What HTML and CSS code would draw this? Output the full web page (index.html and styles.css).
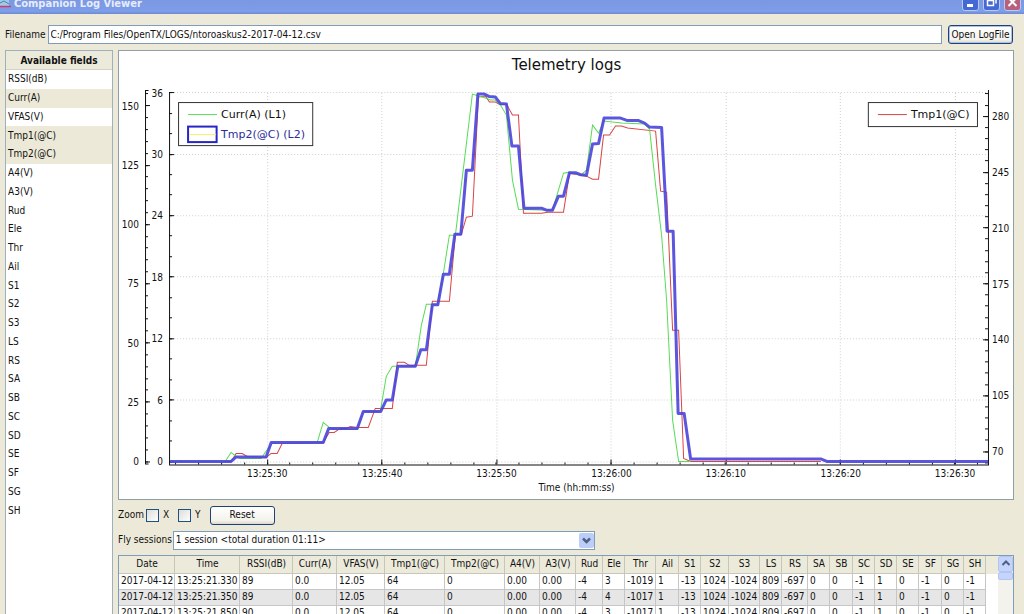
FILE: index.html
```html
<!DOCTYPE html>
<html lang="en">
<head>
<meta charset="utf-8">
<title>Companion Log Viewer</title>
<link rel="stylesheet" href="styles.css">
</head>
<body>
<div class="window">
  <header class="titlebar">
    <svg class="app-icon" width="12" height="12" viewBox="0 0 12 12" aria-hidden="true">
      <path d="M0 0h9v8H0z" fill="#a9c4ee"/><path d="M0 4l4-2 5 3" fill="none" stroke="#2c9a8a"/><path d="M0 7.500h11" stroke="#c84068" stroke-width="1.5"/>
    </svg>
    <h1 class="title">Companion Log Viewer</h1>
    <button class="win-btn" aria-label="Minimize"><svg width="15" height="16" viewBox="0 0 15 16"><path d="M4 11.500h6" stroke="#fff" stroke-width="3"/></svg></button>
    <button class="win-btn" aria-label="Restore"><svg width="15" height="16" viewBox="0 0 15 16"><path d="M3.500 6.500h6v5h-6zM3 6.500h7M6 3.500h6v6" fill="none" stroke="#fff" stroke-width="1.500"/></svg></button>
    <button class="win-btn close" aria-label="Close"><svg width="15" height="16" viewBox="0 0 15 16"><path d="M3.500 4l8 8M11.500 4l-8 8" stroke="#fff" stroke-width="2"/></svg></button>
  </header>

  <form class="file-row">
    <label for="filename">Filename</label>
    <input id="filename" class="field" type="text" value="C:/Program Files/OpenTX/LOGS/ntoroaskus2-2017-04-12.csv">
    <button class="btn btn-default" type="button">Open LogFile</button>
  </form>

  <div class="body">
    <aside class="fields">
      <h2 class="fields-head">Available fields</h2>
      <ul class="fields-list">
        <li>RSSI(dB)</li><li class="selected">Curr(A)</li><li>VFAS(V)</li><li class="selected">Tmp1(@C)</li><li class="selected">Tmp2(@C)</li><li>A4(V)</li><li>A3(V)</li><li>Rud</li><li>Ele</li><li>Thr</li><li>Ail</li><li>S1</li><li>S2</li><li>S3</li><li>LS</li><li>RS</li><li>SA</li><li>SB</li><li>SC</li><li>SD</li><li>SE</li><li>SF</li><li>SG</li><li>SH</li>
      </ul>
    </aside>

    <main class="main">
      <section class="chart">
        <svg class="plot" viewBox="119 51 893 447" role="img" aria-label="Telemetry logs">
          <text class="chart-title" x="566" y="70">Telemetry logs</text>
          <g id="grid" class="grid"></g>
          <g id="axes" class="axes">
            <path d="M145.500 90V464M169.500 92V464.500H987.500V90M145.500 90.500h3M145.500 463.500h3"/>
          </g>
          <g id="labels" class="tick-labels"></g>
          <text class="axis-title" x="576" y="491">Time (hh:mm:ss)</text>
          <polyline class="curve red" points="170,461 231,461 236,453 242,453 247,456 266,457 271,453 277,453 282,443 323,442 329,432 334,432 340,428 346,428 350,426 357,427 368,427 375,408 392,408 397,362 404,362 409,365 426,365 432,301 449,301 455,234 461,234 466,217 472,216 478,97 485,96 489,102 495,102 500,105 506,104 512,115 518,115 523,213 541,213 547,212 563,212 569,173 586,176 592,179 598,179 603,135 609,135 615,126 621,126 627,128 655,131 660,191 666,192 672,330 678,330 683,458 690,461 820,461"/>
          <polyline class="curve green" points="170,461 225,461 231,452 236,456 240,458 261,458 267,449 272,443 317,442 323,422 329,427 334,429 357,429 363,411 380,411 386,376 392,366 415,366 421,325 426,304 437,304 443,273 449,235 455,235 461,185 472,94 478,96 485,98 490,100 495,100 500,105 506,115 512,180 518,209 546,210 552,210 563,173 569,172 580,175 586,170 592,125 598,133 603,121 621,123 644,124 649,129 655,185 661,235 666,300 672,420 678,461 690,461"/>
          <polyline class="curve blue" points="170,461 231,461 236,456.500 266,456.500 271,442 323,442 328.500,428 357,428 363,411 380.500,411 386,399.500 392,399.500 397.500,366 415,366 420.500,349.500 426,349.500 432,304.500 437.500,304.500 443,274 449,274 454.500,234 460.500,234 466,170 472,170 477.500,94 484,94 489,96.500 495,97 500,103.500 506,104 511.500,146 518,146 523.500,208 541,208 546,210 552,210 558,196 563,196 569,172.500 575,172.500 580,174.500 586,175 592,144 598,143.500 603.500,118 620,118 627,120.500 638,120.500 644,123 649,127 661,127.500 666.500,231 672.500,231 677.500,413 683.500,413 690,458.500 820,458.500 826,461 987,461"/>
          <g class="legend">
            <rect class="legend-box" x="178.500" y="102.500" width="134" height="43"/>
            <path class="curve green" d="M188 114.500h29"/>
            <rect x="188" y="126.500" width="28.500" height="15.500" fill="#fff" stroke="#2626c4" stroke-width="2"/>
            <path d="M189 134.500h27" stroke="#f4ee70"/>
            <text x="221" y="118">Curr(A) (L1)</text>
            <text class="legend-active" x="221" y="138">Tmp2(@C) (L2)</text>
            <rect class="legend-box" x="867.500" y="102.500" width="109" height="24"/>
            <path class="curve red" d="M877 114.500h29"/>
            <text x="910" y="118">Tmp1(@C)</text>
          </g>
        </svg>
      </section>

      <div class="zoom-row">
        <span>Zoom</span>
        <label class="check"><input type="checkbox">X</label>
        <label class="check"><input type="checkbox">Y</label>
        <button class="btn reset" type="button">Reset</button>
      </div>

      <div class="session-row">
        <label for="session">Fly sessions</label>
        <select id="session" class="field select"><option>1 session &lt;total duration 01:11&gt;</option></select>
      </div>

      <section class="log">
        <div class="log-view">
          <table class="log-table">
            <colgroup id="cols"></colgroup>
            <thead><tr><th>Date</th><th>Time</th><th>RSSI(dB)</th><th>Curr(A)</th><th>VFAS(V)</th><th>Tmp1(@C)</th><th>Tmp2(@C)</th><th>A4(V)</th><th>A3(V)</th><th>Rud</th><th>Ele</th><th>Thr</th><th>Ail</th><th>S1</th><th>S2</th><th>S3</th><th>LS</th><th>RS</th><th>SA</th><th>SB</th><th>SC</th><th>SD</th><th>SE</th><th>SF</th><th>SG</th><th>SH</th></tr></thead>
            <tbody>
              <tr><td>2017-04-12</td><td>13:25:21.330</td><td>89</td><td>0.0</td><td>12.05</td><td>64</td><td>0</td><td>0.00</td><td>0.00</td><td>-4</td><td>3</td><td>-1019</td><td>1</td><td>-13</td><td>1024</td><td>-1024</td><td>809</td><td>-697</td><td>0</td><td>0</td><td>-1</td><td>1</td><td>0</td><td>-1</td><td>0</td><td>-1</td></tr>
              <tr><td>2017-04-12</td><td>13:25:21.350</td><td>89</td><td>0.0</td><td>12.05</td><td>64</td><td>0</td><td>0.00</td><td>0.00</td><td>-4</td><td>4</td><td>-1017</td><td>1</td><td>-13</td><td>1024</td><td>-1024</td><td>809</td><td>-697</td><td>0</td><td>0</td><td>-1</td><td>1</td><td>0</td><td>-1</td><td>0</td><td>-1</td></tr>
              <tr><td>2017-04-12</td><td>13:25:21.850</td><td>90</td><td>0.0</td><td>12.05</td><td>64</td><td>0</td><td>0.00</td><td>0.00</td><td>-4</td><td>3</td><td>-1017</td><td>1</td><td>-13</td><td>1024</td><td>-1024</td><td>809</td><td>-697</td><td>0</td><td>0</td><td>-1</td><td>1</td><td>0</td><td>-1</td><td>0</td><td>-1</td></tr>
            </tbody>
          </table>
        </div>
        <div class="scrollbar">
          <button class="scroll-btn" aria-label="Scroll up"><svg width="10" height="8" viewBox="0 0 10 8"><path d="M1.500 6L5 2.500 8.500 6" fill="none" stroke="#4d6185" stroke-width="2"/></svg></button>
          <div class="scroll-thumb"></div>
        </div>
      </section>
    </main>
  </div>
</div>
<script src="chart.js"></script>
</body>
</html>
```

FILE: styles.css
```css
* { box-sizing: border-box; }
body {
  margin: 0;
  background: #ece9d8;
  color: #111;
  font: 10px/14px "DejaVu Sans Condensed", "DejaVu Sans", sans-serif;
}
.window { display: flex; flex-direction: column; height: 100vh; overflow: hidden; }
button, input, select { font: inherit; color: inherit; }

.titlebar {
  display: flex;
  align-items: flex-end;
  gap: 2px;
  flex: none;
  height: 14px;
  padding: 0 3px 3px 0;
  overflow: hidden;
  background: linear-gradient(#7d98e2, #7c9be6 60%, #7da0ec 80%, #7088cc);
}
.app-icon { flex: none; }
.title {
  flex: 1;
  margin: 0;
  color: #e6ecfc;
  font: bold 11px/14px "DejaVu Sans Condensed", "DejaVu Sans", sans-serif;
}
.win-btn {
  display: flex;
  flex: none;
  width: 17px;
  height: 18px;
  padding: 0;
  border: 1px solid #b9c9f2;
  border-radius: 3px;
  background: #4468d4;
}
.win-btn + .win-btn { margin-left: 2px; }
.win-btn.close { background: #b8617c; }

.file-row { display: flex; align-items: center; gap: 6px; flex: none; padding: 11px 11px 6px 5px; }
.file-row label { margin-right: -4px; }
.field { height: 19px; border: 1px solid #7f9db9; background: #fff; padding: 0 2px; }
.file-row .field { flex: 1; min-width: 0; }
.btn {
  height: 19px;
  padding: 0;
  border: 1px solid #1d4273;
  border-radius: 3px;
  background: linear-gradient(#fff, #f3f2ec 80%, #dcd8cb);
}
.btn-default { width: 65px; box-shadow: inset 0 0 0 1px #a9c2ee; white-space: nowrap; }

.body { display: flex; gap: 5px; flex: 1; min-height: 0; padding: 0 10px 0 5px; }
.fields { flex: none; width: 108px; border: 1px solid #9fb0bd; border-bottom: 0; background: #fff; }
.fields-head {
  margin: 0;
  height: 19px;
  border-bottom: 1px solid #d6d2c2;
  background: #ebeadb;
  font-size: 10px;
  line-height: 19px;
  text-align: center;
}
.fields-list {
  display: grid;
  grid-template-rows: repeat(24, 1fr);
  height: 450px;
  margin: 0;
  padding: 0;
  list-style: none;
}
.fields-list li { display: flex; align-items: center; padding-left: 2px; }
.fields-list .selected { background: #ece9d8; }

.main { display: flex; flex-direction: column; flex: 1; min-width: 0; }
.chart { flex: none; border: 1px solid #8f9fa8; background: #fff; }
.plot { display: block; width: 100%; height: auto; }
.plot text { fill: #111; font-size: 10px; }
.plot .chart-title { font-family: "DejaVu Sans", sans-serif; font-size: 15px; text-anchor: middle; }
.plot .axis-title { text-anchor: middle; }
.grid path { stroke: #cfcfcf; stroke-dasharray: 1 2; }
.axes path { fill: none; stroke: #111; }
.curve { fill: none; stroke-width: 1; }
.red { stroke: #d94444; }
.green { stroke: #58dc58; }
.blue { stroke: #4a44dc; stroke-width: 3; stroke-opacity: 0.9; stroke-linejoin: round; }
.legend-box { fill: #fff; stroke: #333; }
.plot .legend text { font-family: "DejaVu Sans", sans-serif; font-size: 11px; }
.plot .legend .legend-active { fill: #2c2c9c; }

.zoom-row { display: flex; align-items: center; flex: none; margin-top: 6px; height: 19px; }
.check { display: flex; align-items: center; gap: 4px; margin-left: 2px; }
.check + .check { margin-left: 9px; }
.check input {
  appearance: none;
  width: 13px;
  height: 13px;
  margin: 0;
  border: 1px solid #1c5180;
  background: linear-gradient(135deg, #dcdcd7, #fff);
}
.reset { width: 65px; margin-left: 9px; }
.session-row { display: flex; align-items: center; flex: none; gap: 1px; margin: 6px 0 5px; height: 19px; }
.select {
  appearance: none;
  width: 422px;
  background: #fff url("data:image/svg+xml,%3Csvg xmlns='http://www.w3.org/2000/svg' width='15' height='15'%3E%3Crect width='15' height='15' rx='2' fill='%23bccdf7'/%3E%3Cpath d='M4 5.500l3.500 3.500L11 5.500' fill='none' stroke='%234d6185' stroke-width='2.500'/%3E%3C/svg%3E") no-repeat right 0 center;
}

.log { display: flex; flex: 1; min-height: 0; border: 1px solid #7f9db9; border-bottom: 0; background: #fff; }
.log-view { flex: 1; min-width: 0; overflow: hidden; background: linear-gradient(#ebeadb 18px, #fff 18px); }
.log-table { table-layout: fixed; width: 867px; border-collapse: separate; border-spacing: 0; }
.log-table th {
  height: 18px;
  padding: 0;
  border-bottom: 1px solid #cbc7b8;
  background: #ebeadb;
  box-shadow: inset -1px 0 #c9c6b6;
  font-weight: normal;
}
.log-table td {
  height: 16px;
  padding: 0 2px;
  border-right: 1px solid #c6c6c6;
  border-bottom: 1px solid #c6c6c6;
  line-height: 14px;
  white-space: nowrap;
}
.log-table tr:nth-child(even) td { background: #e6e6e6; }
.scrollbar { flex: none; width: 15px; background: #f3f2ec; }
.scroll-btn, .scroll-thumb { display: block; width: 15px; border: 1px solid #b3c5f0; border-radius: 2px; background: #c5d4fb; }
.scroll-btn { height: 16px; padding: 0; line-height: 8px; }
.scroll-thumb { height: 8px; }
```

FILE: chart.js
```js
const NS = 'http://www.w3.org/2000/svg';
const add = (parent, name, attrs, text) => {
  const el = document.createElementNS(NS, name);
  for (const key in attrs) el.setAttribute(key, attrs[key]);
  if (text !== undefined) el.textContent = text;
  document.getElementById(parent).appendChild(el);
};
const snap = v => Math.floor(v) + 0.5;

function verticalAxis({ x, dir, origin, step, parts, labels, textX, anchor }) {
  labels.forEach((label, i) => {
    const y = origin - i * step;
    add('axes', 'path', { d: `M${x} ${snap(y)}h${5 * dir}` });
    add('labels', 'text', { x: textX, y: Math.round(y) + 4, 'text-anchor': anchor }, label);
  });
  for (let i = -1; i < labels.length * parts; i++) {
    const y = origin - i * step / parts;
    if (y > 92 && y < 463) add('axes', 'path', { d: `M${x} ${snap(y)}h${3 * dir}` });
  }
}

verticalAxis({ x: 145, dir: 1, origin: 461, step: 59.2, parts: 5, labels: [0, 25, 50, 75, 100, 125, 150], textX: 139, anchor: 'end' });
verticalAxis({ x: 169, dir: 1, origin: 461, step: 61.4, parts: 3, labels: [0, 6, 12, 18, 24, 30, 36], textX: 163, anchor: 'end' });
verticalAxis({ x: 987, dir: -1, origin: 451, step: 55.8, parts: 5, labels: [70, 105, 140, 175, 210, 245, 280], textX: 991, anchor: 'start' });

for (let i = 0; i < 7; i++) add('grid', 'path', { d: `M174 ${snap(461 - i * 61.4)}H987` });

['13:25:30', '13:25:40', '13:25:50', '13:26:00', '13:26:10', '13:26:20', '13:26:30'].forEach((label, i) => {
  const x = 267 + i * 114.5;
  add('grid', 'path', { d: `M${snap(x)} 93V460` });
  add('axes', 'path', { d: `M${snap(x)} 464v-5` });
  add('labels', 'text', { x: Math.round(x), y: 477, 'text-anchor': 'middle' }, label);
});
for (let x = 175.4; x < 987; x += 22.9) add('axes', 'path', { d: `M${snap(x)} 464v-2` });

[56, 65, 53, 44, 48, 60, 60, 35, 36, 27, 22, 31, 23, 22, 28, 31, 22, 26, 22, 23, 22, 22, 22, 23, 22, 22].forEach(width => {
  const col = document.createElement('col');
  col.style.width = width + 'px';
  document.getElementById('cols').appendChild(col);
});
```
